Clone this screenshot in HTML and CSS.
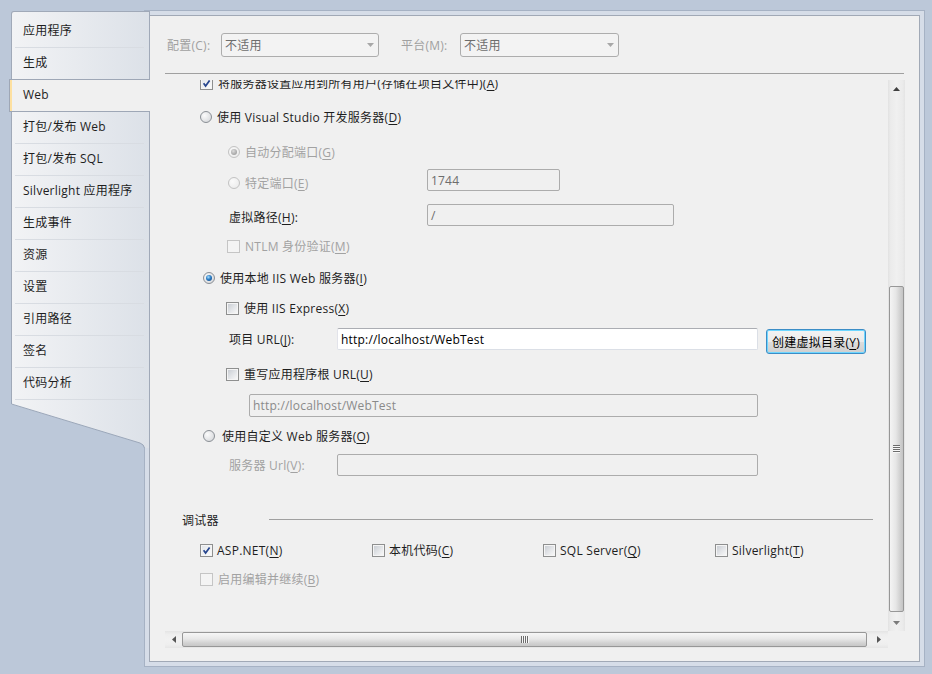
FILE: index.html
```html
<!DOCTYPE html>
<html lang="zh-CN">
<head>
<meta charset="utf-8">
<title>WebTest 属性 - Web</title>
<link rel="stylesheet" href="styles.css">
</head>
<body>
<div class="workspace">
  <nav class="tabs">
    <ul class="tab-list">
      <li class="tab"><span class="tab-label">应用程序</span></li>
      <li class="tab"><span class="tab-label">生成</span></li>
      <li class="tab tab-active"><span class="tab-label">Web</span></li>
      <li class="tab"><span class="tab-label">打包/发布 Web</span></li>
      <li class="tab"><span class="tab-label">打包/发布 SQL</span></li>
      <li class="tab"><span class="tab-label">Silverlight 应用程序</span></li>
      <li class="tab"><span class="tab-label">生成事件</span></li>
      <li class="tab"><span class="tab-label">资源</span></li>
      <li class="tab"><span class="tab-label">设置</span></li>
      <li class="tab"><span class="tab-label">引用路径</span></li>
      <li class="tab"><span class="tab-label">签名</span></li>
      <li class="tab"><span class="tab-label">代码分析</span></li>
    </ul>
    <svg class="tab-foot" width="139" height="48" viewBox="0 0 139 48">
      <defs>
        <linearGradient id="tabFill" gradientUnits="userSpaceOnUse" x1="0" y1="0" x2="139" y2="0">
          <stop offset="0" stop-color="#f2f3f5"/>
          <stop offset="1" stop-color="#dce1e8"/>
        </linearGradient>
      </defs>
      <path d="M0 0V4L129 43Q133 44.5 133.5 48H139V0Z" fill="url(#tabFill)"/>
      <path d="M0.5 0V4L129 43Q133 44.5 133.5 48" fill="none" stroke="#9ba7b9"/>
      <path d="M138.5 0V48" stroke="#a0a9b8"/>
    </svg>
  </nav>

  <div class="frame">
    <section class="panel">
      <div class="config-bar">
        <span class="bar-label lbl-config">配置(C):</span>
        <div class="combo combo-config"><span class="combo-text">不适用</span><svg width="7" height="4" viewBox="0 0 7 4"><path d="M0 0H7L3.5 4Z" fill="#a8a8a8"/></svg></div>
        <span class="bar-label lbl-platform">平台(M):</span>
        <div class="combo combo-platform"><span class="combo-text">不适用</span><svg width="7" height="4" viewBox="0 0 7 4"><path d="M0 0H7L3.5 4Z" fill="#a8a8a8"/></svg></div>
      </div>
      <div class="rule"></div>

      <div class="scroller">
        <div class="viewport">
          <div class="sheet">
            <div class="row r1">
              <span class="cb checked"><svg width="9" height="9" viewBox="0 0 9 9"><path d="M1.6 4.2L3.6 7L7.6 1.4" fill="none" stroke="#26458e" stroke-width="1.7"/></svg></span>
              <span class="txt">将服务器设置应用到所有用户(存储在项目文件中)(<u>A</u>)</span>
            </div>
            <div class="row r2">
              <span class="rb"></span><span class="txt">使用 Visual Studio 开发服务器(<u>D</u>)</span>
            </div>
            <div class="row r3 dim">
              <span class="rb off on"></span><span class="txt">自动分配端口(<u>G</u>)</span>
            </div>
            <div class="row r4">
              <span class="lead lead-port dim"><span class="rb off"></span><span class="txt">特定端口(<u>E</u>)</span></span>
              <span class="box box-off box-port">1744</span>
            </div>
            <div class="row r5">
              <span class="lead lead-vpath">虚拟路径(<u>H</u>):</span>
              <span class="box box-off box-vpath">/</span>
            </div>
            <div class="row r6 dim">
              <span class="cb off"></span><span class="txt">NTLM 身份验证(<u>M</u>)</span>
            </div>
            <div class="row r7">
              <span class="rb on"></span><span class="txt">使用本地 IIS Web 服务器(<u>I</u>)</span>
            </div>
            <div class="row r8">
              <span class="cb"></span><span class="txt">使用 IIS Express(<u>X</u>)</span>
            </div>
            <div class="row r9">
              <span class="lead lead-url">项目 URL(<u>J</u>):</span>
              <span class="box box-live box-url">http://localhost/WebTest</span>
              <button class="btn" type="button">创建虚拟目录(<u>Y</u>)</button>
            </div>
            <div class="row r10">
              <span class="cb"></span><span class="txt">重写应用程序根 URL(<u>U</u>)</span>
            </div>
            <div class="row r11">
              <span class="box box-off box-root">http://localhost/WebTest</span>
            </div>
            <div class="row r12">
              <span class="rb"></span><span class="txt">使用自定义 Web 服务器(<u>O</u>)</span>
            </div>
            <div class="row r13">
              <span class="lead lead-url dim">服务器 Url(<u>V</u>):</span>
              <span class="box box-off box-url"></span>
            </div>
            <div class="row r14">
              <span class="group-title">调试器</span>
              <span class="group-line"></span>
            </div>
            <div class="row r15">
              <span class="opt"><span class="cb checked"><svg width="9" height="9" viewBox="0 0 9 9"><path d="M1.6 4.2L3.6 7L7.6 1.4" fill="none" stroke="#26458e" stroke-width="1.7"/></svg></span><span class="txt">ASP.NET(<u>N</u>)</span></span>
              <span class="opt"><span class="cb"></span><span class="txt">本机代码(<u>C</u>)</span></span>
              <span class="opt"><span class="cb"></span><span class="txt">SQL Server(<u>Q</u>)</span></span>
              <span class="opt"><span class="cb"></span><span class="txt">Silverlight(<u>T</u>)</span></span>
            </div>
            <div class="row r16 dim">
              <span class="cb off"></span><span class="txt">启用编辑并继续(<u>B</u>)</span>
            </div>
          </div>
        </div>

        <div class="vbar">
          <div class="sb-btn"><svg width="7" height="4" viewBox="0 0 7 4"><path d="M0 4H7L3.5 0Z" fill="#3f3f3f"/></svg></div>
          <div class="vtrack">
            <div class="vthumb"><svg width="7" height="8" viewBox="0 0 7 8"><path d="M0 0.5H7M0 2.5H7M0 4.5H7M0 6.5H7" stroke="#6c6c6c"/><path d="M0 1.5H7M0 3.5H7M0 5.5H7M0 7.5H7" stroke="#f7f7f7"/></svg></div>
          </div>
          <div class="sb-btn"><svg width="7" height="4" viewBox="0 0 7 4"><path d="M0 0H7L3.5 4Z" fill="#7b7b7b"/></svg></div>
        </div>

        <div class="hbar">
          <div class="sb-btn"><svg width="4" height="7" viewBox="0 0 4 7"><path d="M4 0V7L0 3.5Z" fill="#555"/></svg></div>
          <div class="hthumb"><svg width="8" height="7" viewBox="0 0 8 7"><path d="M0.5 0V7M2.5 0V7M4.5 0V7M6.5 0V7" stroke="#6c6c6c"/><path d="M1.5 0V7M3.5 0V7M5.5 0V7M7.5 0V7" stroke="#f7f7f7"/></svg></div>
          <div class="sb-btn sb-right"><svg width="4" height="7" viewBox="0 0 4 7"><path d="M0 0V7L4 3.5Z" fill="#555"/></svg></div>
        </div>
        <div class="corner"></div>
      </div>
    </section>
  </div>
</div>
</body>
</html>
```
FILE: styles.css
```css
html, body {
  margin: 0;
  padding: 0;
}

body {
  width: 932px;
  height: 674px;
  overflow: hidden;
  background: #bcc8d9;
  font: 12px/16px "Open Sans", "Noto Sans CJK SC", sans-serif;
  letter-spacing: 0.25px;
  color: #1e1e1e;
}

u {
  text-underline-offset: 2px;
}

.workspace {
  display: flex;
  align-items: flex-start;
  padding-top: 10px;
}

/* ---------- left page tabs ---------- */
.tabs {
  position: relative;
  z-index: 1;
  width: 139px;
  margin: 1px -6px 0 11px;
  display: flex;
  flex-direction: column;
  flex: none;
}

.tab-list {
  list-style: none;
  margin: 0;
  padding: 4px 0 0;
  border: 1px solid #a0a9b8;
  border-bottom: none;
  border-top-left-radius: 3px;
  background: linear-gradient(90deg, #f2f3f5, #dce1e8);
}

.tab {
  height: 32px;
}

.tab-label {
  display: block;
  height: 31px;
  margin: 0 5px 0 3px;
  padding-left: 8px;
  line-height: 30px;
  border-bottom: 1px solid #d8dce2;
  white-space: nowrap;
}

.tab-active {
  position: relative;
  height: 31px;
  margin: -1px -1px 0 -3px;
  border: 1px solid #9ea7b6;
  border-right: none;
  background: #f0f0f0;
  box-shadow: inset 2px 0 0 #fde0a0;
}

.tab-active .tab-label {
  margin: 0;
  padding-left: 13px;
  border-bottom: none;
}

.tab-foot {
  display: block;
}

/* ---------- property page frame ---------- */
.frame {
  box-sizing: border-box;
  width: 781px;
  height: 657px;
  border: 1px solid #a6b2c4;
  background: #d6dde8;
  padding: 4px;
  display: flex;
  flex: none;
}

.panel {
  flex: 1;
  box-sizing: border-box;
  border: 1px solid #a1a9b6;
  background: #f0f0f0;
  padding: 17px 14px 0 15px;
  display: flex;
  flex-direction: column;
}

.config-bar {
  display: flex;
  align-items: center;
  height: 24px;
  padding-left: 2px;
}

.bar-label {
  color: #a0a0a0;
  white-space: nowrap;
  padding-top: 2px;
}

.lbl-config { width: 54px; }
.lbl-platform { width: 59px; margin-left: 22px; }

.combo {
  box-sizing: border-box;
  height: 24px;
  border: 1px solid #adadad;
  border-radius: 3px;
  background: #f3f3f3;
  color: #6d6d6d;
  display: flex;
  align-items: center;
  justify-content: space-between;
  padding: 0 4px 0 3px;
}

.combo-text { padding-top: 2px; }
.combo svg { display: block; }
.combo-config { width: 158px; }
.combo-platform { width: 159px; }

.rule {
  height: 1px;
  margin: 16px 1px 0 0;
  background: #a0a0a0;
}

/* ---------- scrolling area ---------- */
.scroller {
  margin-top: 6px;
  display: grid;
  grid-template-columns: 1fr 17px;
  grid-template-rows: 551px 17px;
}

.viewport {
  overflow: hidden;
}

/* the sheet is scrolled down a little, so its first row is partly hidden */
.sheet {
  margin-top: -8px;
  display: grid;
  grid-template-rows: 34px 35px 31px 34px 29px 32px 30px 31px 35px 31px 31px 29px 55px 30px 29px 22px;
}

.row {
  display: flex;
  align-items: center;
  height: 22px;
  align-self: start;
  white-space: nowrap;
}

.txt {
  margin-left: 5px;
  padding-top: 2px;
}

.lead,
.group-title {
  padding-top: 2px;
}

.dim { color: #a2a2a2; }

.r1 { padding-left: 35px; }
.r2 { padding-left: 35px; }
.r3 { padding-left: 63px; }
.r4 { padding-left: 63px; }
.r5 { padding-left: 64px; }
.r6 { padding-left: 62px; }
.r7 { padding-left: 38px; }
.r8 { padding-left: 61px; }
.r9 { padding-left: 64px; }
.r10 { padding-left: 61px; }
.r11 { padding-left: 84px; align-items: flex-start; }
.r12 { padding-left: 38px; }
.r13 { padding-left: 64px; }
.r14 { padding-left: 17px; padding-right: 15px; }
.r15 { padding-left: 35px; display: grid; grid-template-columns: 172px 171px 172px auto; }
.r16 { padding-left: 35px; }

.r12 .txt { margin-left: 7px; }

.lead {
  display: flex;
  align-items: center;
  flex: none;
}

.lead-port { padding-top: 0; }
.lead-port { width: 199px; }
.lead-vpath { width: 198px; }
.lead-url { width: 108px; }

.opt {
  display: flex;
  align-items: center;
}

.opt .txt { margin-left: 4px; }

/* check boxes */
.cb {
  flex: none;
  box-sizing: border-box;
  width: 13px;
  height: 13px;
  border: 1px solid #8e8f8f;
  background: #f5f5f5;
  padding: 1px;
}

.cb::before {
  content: "";
  display: block;
  width: 9px;
  height: 9px;
  background: linear-gradient(135deg, #caced4 0%, #e4e6e9 55%, #f7f7f7 100%);
}

.cb.checked::before { display: none; }

.cb.checked svg {
  display: block;
  background: linear-gradient(135deg, #e2e5ea 0%, #f2f3f4 60%, #fbfbfb 100%);
}

.cb.off {
  border-color: #c5c5c5;
  background: #f4f4f4;
}

.cb.off::before { background: #f4f4f4; }

/* radio buttons */
.rb {
  flex: none;
  box-sizing: border-box;
  width: 12px;
  height: 12px;
  border-radius: 50%;
  border: 1px solid #8a8f95;
  background: radial-gradient(circle at 35% 35%, #fbfbfb 0, #e6e7e9 50%, #cfd2d6 100%);
  display: flex;
  align-items: center;
  justify-content: center;
}

.rb.on::after {
  content: "";
  width: 6px;
  height: 6px;
  border-radius: 50%;
  background: radial-gradient(circle at 40% 35%, #a9e0ff 0, #2b7cc4 45%, #0f3f78 100%);
}

.rb.off {
  border-color: #c2c2c2;
  background: radial-gradient(circle at 35% 35%, #fafafa 0, #eeeeee 70%, #e4e4e4 100%);
}

.rb.off.on::after {
  background: radial-gradient(circle at 40% 35%, #dcdcdc 0, #ababab 60%, #979797 100%);
}

/* text boxes */
.box {
  flex: none;
  box-sizing: border-box;
  height: 22px;
  padding: 1px 3px 0;
  line-height: 20px;
  border-radius: 2px;
  overflow: hidden;
  letter-spacing: 0.2px;
}

.box-off {
  border: 1px solid #acacac;
  background: #f0f0f0;
  color: #6d6d6d;
}

.box-live {
  border: 1px solid #dbdfe6;
  border-top-color: #abadb3;
  border-left-color: #e2e3ea;
  background: #ffffff;
  color: #000;
}

.box-port { width: 133px; margin-bottom: 6px; }
.box-vpath { width: 247px; margin-bottom: 4px; }
.box-url { width: 421px; }
.box-root { width: 509px; height: 23px; color: #8a8a8a; }

.btn {
  flex: none;
  align-self: flex-start;
  box-sizing: border-box;
  width: 100px;
  height: 25px;
  margin: 1px 0 0 8px;
  padding: 2px 0 0;
  border: 1px solid #3c8dc6;
  border-radius: 3px;
  background: linear-gradient(#f3f3f3 0, #ebebeb 50%, #dddddd 51%, #cfcfcf 100%);
  box-shadow: inset 0 0 0 1px #6ed6ff;
  font: inherit;
  letter-spacing: inherit;
  color: #000;
}

.group-title { width: 87px; flex: none; }

.group-line {
  flex: 1;
  height: 1px;
  background: #a0a0a0;
  margin-top: -1px;
}

/* ---------- scroll bars ---------- */
.sb-btn {
  height: 17px;
  flex: none;
  display: flex;
  align-items: center;
  justify-content: center;
}

.sb-btn svg { display: block; }

.vbar {
  display: flex;
  flex-direction: column;
  background: linear-gradient(90deg, #e2e2e2 0, #ebebeb 15%, #f0f0f0 50%, #ebebeb 85%, #e4e4e4 100%);
}

.vtrack {
  flex: 1;
  display: flex;
  flex-direction: column;
}

.vthumb {
  box-sizing: border-box;
  height: 326px;
  margin: 189px 1px 0;
  border: 1px solid #979797;
  border-radius: 2px;
  background: linear-gradient(90deg, #f4f4f4 0, #e6e6e6 45%, #d2d2d2 75%, #c4c4c4 100%);
  display: flex;
  align-items: center;
  justify-content: center;
}

.vthumb svg { display: block; }

.hbar {
  display: flex;
  background: linear-gradient(#e4e4e4 0, #eeeeee 20%, #f1f1f1 50%, #eeeeee 80%, #e6e6e6 100%);
}

.hbar .sb-btn {
  width: 17px;
  height: 17px;
}

.hthumb {
  box-sizing: border-box;
  width: 685px;
  height: 15px;
  margin: 1px 0;
  border: 1px solid #979797;
  border-radius: 2px;
  background: linear-gradient(#f6f6f6 0, #e8e8e8 45%, #d3d3d3 75%, #c7c7c7 100%);
  display: flex;
  align-items: center;
  justify-content: center;
}

.hthumb svg { display: block; }

.sb-right {
  margin-left: 3px;
}

.corner {
  background: #f0f0f0;
}
```
